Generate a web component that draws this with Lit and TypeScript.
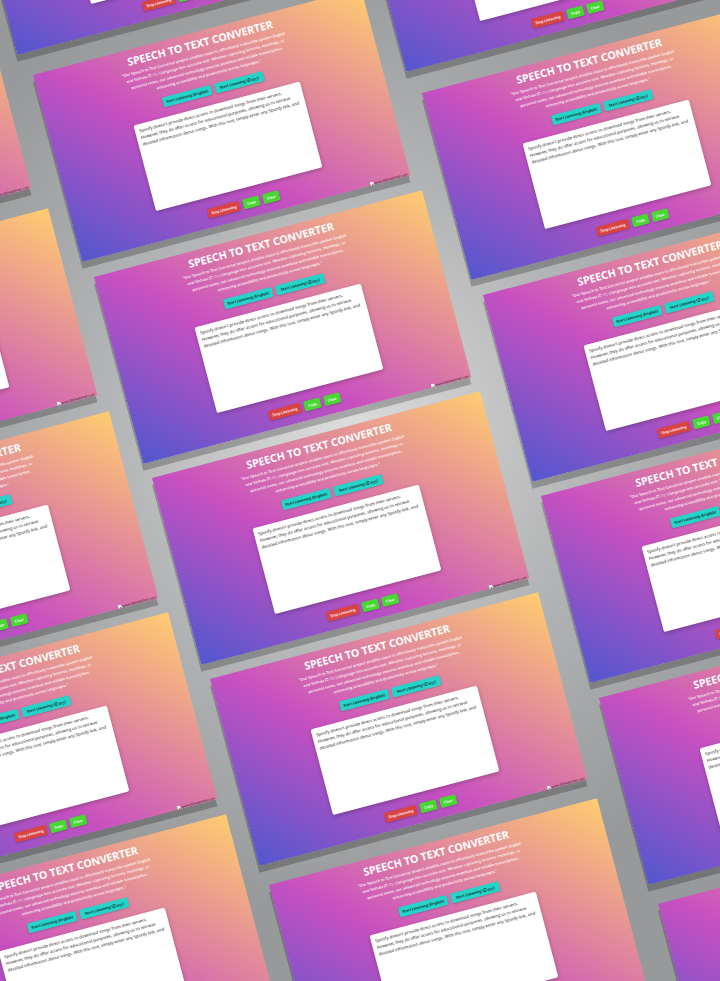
import { LitElement, html, css } from "lit";
import { customElement } from "lit/decorators.js";

/* Top-left corner of every tilted screen on the canvas. */
const SCREENS: [number, number][] = [
  [-346, 88], [-280, 295], [-219, 498], [-160, 699], [-102, 901],
  [-32, -132.5], [33.3, 75], [94, 277], [152.3, 477.5], [210.3, 679.3], [269, 885.3],
  [357, -115], [422.3, 93], [483.3, 295], [541.3, 496], [599.3, 698], [658, 904],
];

@customElement("converter-screen")
export class ConverterScreen extends LitElement {
  static styles = css`
    :host {
      display: flex;
      flex-direction: column;
      align-items: center;
      box-sizing: border-box;
      width: 1357px;
      height: 773px;
      position: relative;
      font-family: "Noto Sans", "Open Sans", sans-serif;
      background: linear-gradient(43deg, #4158d0 -6%, #c850c0 41%, #ffcc70 100%);
      box-shadow: -7px 27px 0 rgba(0, 0, 0, 0.23);
    }
    h1 { margin: 18px 0 0; font-size: 42.6px; line-height: 56px; font-weight: 700; color: #fff; white-space: nowrap; }
    .intro { margin: 8px 0 0 4px; font-size: 15.25px; line-height: 27.4px; font-weight: 500; color: #fff; text-align: center; white-space: nowrap; }
    .sinhala { font-size: 1.08em; line-height: 1; }
    .row { display: flex; gap: 15px; justify-content: center; padding-left: 8px; }
    .start { margin-top: 27px; }
    .btn {
      display: flex; align-items: center; justify-content: center; box-sizing: border-box;
      height: 40px; border-radius: 6px; font-size: 14.9px; font-weight: 600; white-space: nowrap;
      box-shadow: 0 3px 8px rgba(0, 0, 0, 0.25);
    }
    .teal { width: 200px; background: #25d3c8; color: #111; }
    .red { width: 131px; background: #d84343; color: #fff; }
    .green { width: 67px; background: #48d733; color: #fff; }
    .box {
      box-sizing: border-box; width: 688px; height: 354px; margin: 39px 0 44px 4px; padding: 13px 17px;
      background: #fff; border-radius: 8px; color: #222; font-size: 16.8px; line-height: 27.5px; white-space: nowrap;
      box-shadow: 0 6px 18px rgba(0, 0, 0, 0.25);
    }
    .credit { position: absolute; right: 8px; bottom: -2px; display: flex; align-items: center; gap: 1px; font-size: 13.2px; line-height: 18px; color: #222; }
  `;
  render() {
    return html`
      <h1>SPEECH TO TEXT CONVERTER</h1>
      <p class="intro">
        "Our Speech to Text Converter project enables users to effortlessly transcribe spoken English<br />
        and Sinhala (<span class="sinhala">සිංහල</span>) language into accurate text. Whether capturing lectures, meetings, or<br />
        personal notes, our advanced technology ensures seamless and reliable transcription,<br />
        enhancing accessibility and productivity across languages."
      </p>
      <div class="row start">
        <span class="btn teal">Start Listening (English)</span>
        <span class="btn teal">Start Listening (<span class="sinhala">සිංහල</span>)</span>
      </div>
      <div class="box">
        Spotify doesn't provide direct access to download songs from their servers.<br />
        However, they do offer access for educational purposes, allowing us to retrieve<br />
        detailed information about songs. With this tool, simply enter any Spotify link, and
      </div>
      <div class="row">
        <span class="btn red">Stop Listening</span>
        <span class="btn green">Copy</span>
        <span class="btn green">Clear</span>
      </div>
      <div class="credit">
        <svg width="16" height="16" viewBox="0 0 16 16"><path d="M1 1h9l5 5v9H1z" fill="#f4faff" /><path d="M4 15l5-6 5 6z" fill="#4caf50" /></svg>
        www.000webhost.com
      </div>
    `;
  }
}

@customElement("app-root")
export class AppRoot extends LitElement {
  static styles = css`
    :host {
      display: block; position: relative; width: 720px; height: 981px; overflow: hidden;
      background: radial-gradient(circle 480px at 350px 430px, #dcdcdc, #b4b5b6 50%, #98999a 100%);
    }
    .screen { position: absolute; transform-origin: 0 0; transform: rotate(-14.8deg) scale(0.25); }
  `;
  render() {
    return SCREENS.map(
      ([x, y]) => html`<converter-screen class="screen" style="left:${x}px;top:${y}px"></converter-screen>`
    );
  }
}
